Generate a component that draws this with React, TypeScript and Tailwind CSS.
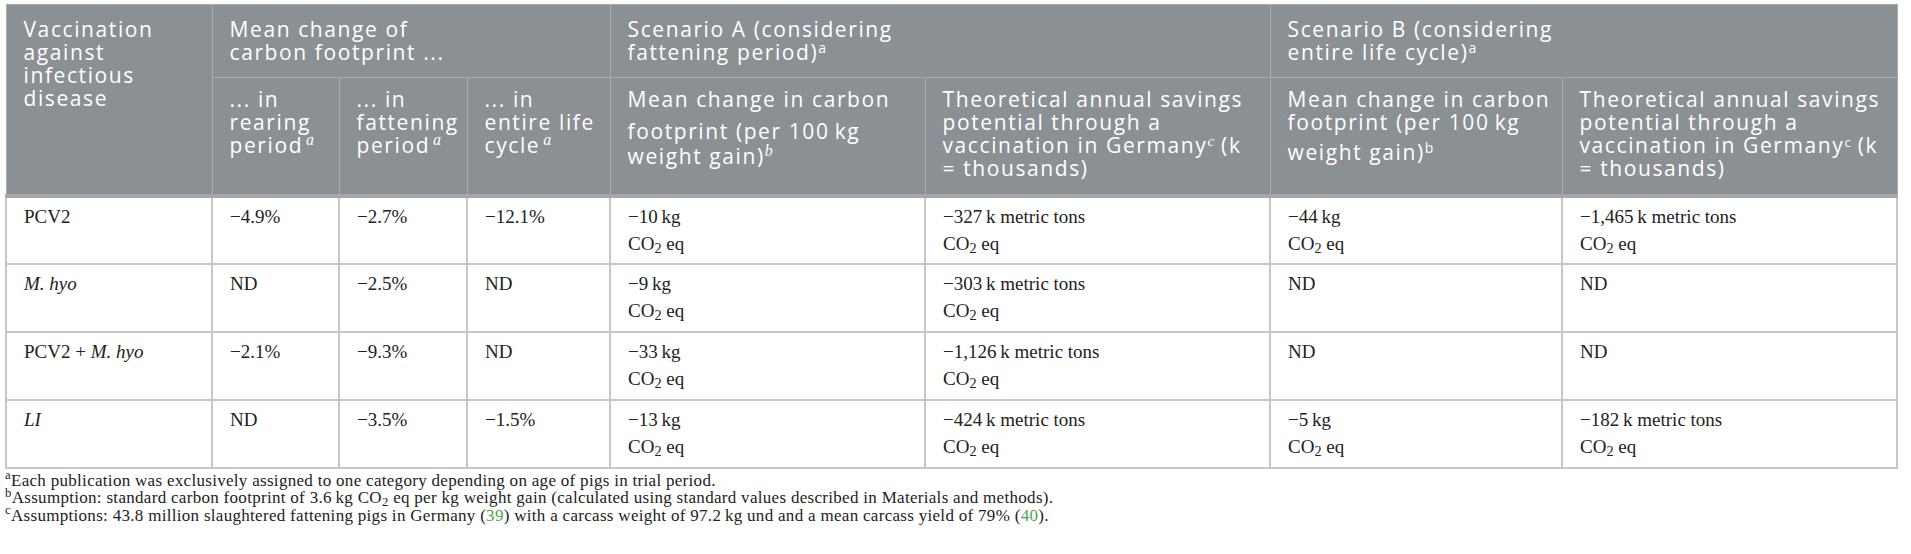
import React from "react";

type Row = {
  name: React.ReactNode;
  rearing: string;
  fattening: string;
  entire: string;
  aKg: string;
  aTons: string;
  bKg?: string;
  bTons?: string;
};

const rows: Row[] = [
  { name: "PCV2", rearing: "−4.9%", fattening: "−2.7%", entire: "−12.1%", aKg: "−10", aTons: "−327", bKg: "−44", bTons: "−1,465" },
  { name: <i>M. hyo</i>, rearing: "ND", fattening: "−2.5%", entire: "ND", aKg: "−9", aTons: "−303" },
  { name: <>PCV2 + <i>M. hyo</i></>, rearing: "−2.1%", fattening: "−9.3%", entire: "ND", aKg: "−33", aTons: "−1,126" },
  { name: <i>LI</i>, rearing: "ND", fattening: "−3.5%", entire: "−1.5%", aKg: "−13", aTons: "−424", bKg: "−5", bTons: "−182" },
];

const Co2 = () => (
  <>
    CO<sub>2</sub> eq
  </>
);

function Kg({ v }: { v?: string }) {
  if (!v) return <>ND</>;
  return (
    <>
      {v}{"\u2009"}kg
      <br />
      <Co2 />
    </>
  );
}

function Tons({ v }: { v?: string }) {
  if (!v) return <>ND</>;
  return (
    <>
      {v}{"\u2009"}k metric tons
      <br />
      <Co2 />
    </>
  );
}

function Th({ children, className = "", rowSpan, colSpan }: { children: React.ReactNode; className?: string; rowSpan?: number; colSpan?: number }) {
  return (
    <th
      rowSpan={rowSpan}
      colSpan={colSpan}
      className={`align-top text-left font-normal whitespace-nowrap px-[17px] border border-[#a9adb0] ${className}`}
    >
      {children}
    </th>
  );
}

function Td({ children }: { children: React.ReactNode }) {
  return (
    <td className="align-top text-left px-[17px] pt-[5px] border-2 border-[#c6c8c8] whitespace-nowrap">
      {children}
    </td>
  );
}

const SerifSup = ({ c }: { c: string }) => (
  <sup className="font-['Liberation_Serif',serif] italic text-[16px] ml-[3px] tracking-normal">{c}</sup>
);

export default function App() {
  return (
    <div className="bg-white w-[1911px] h-[554px] pl-[5px] pt-[4px] overflow-hidden">
      <table className="table-fixed border-collapse w-[1891px]">
        <colgroup>
          <col className="w-[206px]" />
          <col className="w-[127px]" />
          <col className="w-[128px]" />
          <col className="w-[143px]" />
          <col className="w-[315px]" />
          <col className="w-[345px]" />
          <col className="w-[292px]" />
          <col className="w-[335px]" />
        </colgroup>
        <thead className="bg-[#8b9094] text-white font-['Open_Sans','Liberation_Sans',sans-serif] text-[21px] leading-[23px] tracking-[1.6px]">
          <tr className="h-[73px]">
            <Th rowSpan={2} className="pt-[13px] border-b-4 border-b-[#a3a8ab]">
              Vaccination
              <br />
              against
              <br />
              infectious
              <br />
              disease
            </Th>
            <Th colSpan={3} className="pt-[13px]">
              Mean change of
              <br />
              carbon footprint ...
            </Th>
            <Th colSpan={2} className="pt-[13px]">
              Scenario A (considering
              <br />
              fattening period)<sup className="text-[14px] tracking-normal">a</sup>
            </Th>
            <Th colSpan={2} className="pt-[13px]">
              Scenario B (considering
              <br />
              entire life cycle)<sup className="text-[14px] tracking-normal">a</sup>
            </Th>
          </tr>
          <tr className="h-[118px]">
            <Th className="pt-[10px] border-b-4 border-b-[#a3a8ab]">
              ... in
              <br />
              rearing
              <br />
              period
              <SerifSup c="a" />
            </Th>
            <Th className="pt-[10px] border-b-4 border-b-[#a3a8ab]">
              ... in
              <br />
              fattening
              <br />
              period
              <SerifSup c="a" />
            </Th>
            <Th className="pt-[10px] border-b-4 border-b-[#a3a8ab]">
              ... in
              <br />
              entire life
              <br />
              cycle
              <SerifSup c="a" />
            </Th>
            <Th className="pt-[10px] border-b-4 border-b-[#a3a8ab]">
              <div>Mean change in carbon</div>
              <div className="mt-[9px]">footprint (per 100{"\u2009"}kg</div>
              <div className="mt-[2px]">
                weight gain)<sup className="font-['Liberation_Serif',serif] italic text-[16px] tracking-normal">b</sup>
              </div>
            </Th>
            <Th className="pt-[10px] border-b-4 border-b-[#a3a8ab]">
              Theoretical annual savings
              <br />
              potential through a
              <br />
              vaccination in Germany<sup className="font-['Liberation_Serif',serif] italic text-[15px] tracking-normal">c</sup> (k
              <br />= thousands)
            </Th>
            <Th className="pt-[10px] border-b-4 border-b-[#a3a8ab]">
              <div>Mean change in carbon</div>
              <div>footprint (per 100{"\u2009"}kg</div>
              <div className="mt-[7px]">
                weight gain)<sup className="text-[14px] tracking-normal">b</sup>
              </div>
            </Th>
            <Th className="pt-[10px] border-b-4 border-b-[#a3a8ab]">
              Theoretical annual savings
              <br />
              potential through a
              <br />
              vaccination in Germany<sup className="text-[13px] tracking-normal">c</sup> (k
              <br />= thousands)
            </Th>
          </tr>
        </thead>
        <tbody className="font-['Liberation_Serif','Times_New_Roman',serif] text-[19px] leading-[27px] text-[#222]">
          {rows.map((r, i) => (
            <tr key={i} className="h-[68px]">
              <Td>{r.name}</Td>
              <Td>{r.rearing}</Td>
              <Td>{r.fattening}</Td>
              <Td>{r.entire}</Td>
              <Td>
                <Kg v={r.aKg} />
              </Td>
              <Td>
                <Tons v={r.aTons} />
              </Td>
              <Td>
                <Kg v={r.bKg} />
              </Td>
              <Td>
                <Tons v={r.bTons} />
              </Td>
            </tr>
          ))}
        </tbody>
      </table>
      <div className="mt-[3px] font-['Liberation_Serif','Times_New_Roman',serif] text-[17px] leading-[17.5px] tracking-[0.3px] text-[#222]">
        <p>
          <sup>a</sup>Each publication was exclusively assigned to one category depending on age of pigs in trial period.
        </p>
        <p>
          <sup>b</sup>Assumption: standard carbon footprint of 3.6{"\u2009"}kg CO<sub>2</sub> eq per kg weight gain (calculated using standard
          values described in Materials and methods).
        </p>
        <p>
          <sup>c</sup>Assumptions: 43.8 million slaughtered fattening pigs in Germany (<span className="text-[#4ea64a]">39</span>) with a
          carcass weight of 97.2{"\u2009"}kg und and a mean carcass yield of 79% (<span className="text-[#4ea64a]">40</span>).
        </p>
      </div>
    </div>
  );
}
